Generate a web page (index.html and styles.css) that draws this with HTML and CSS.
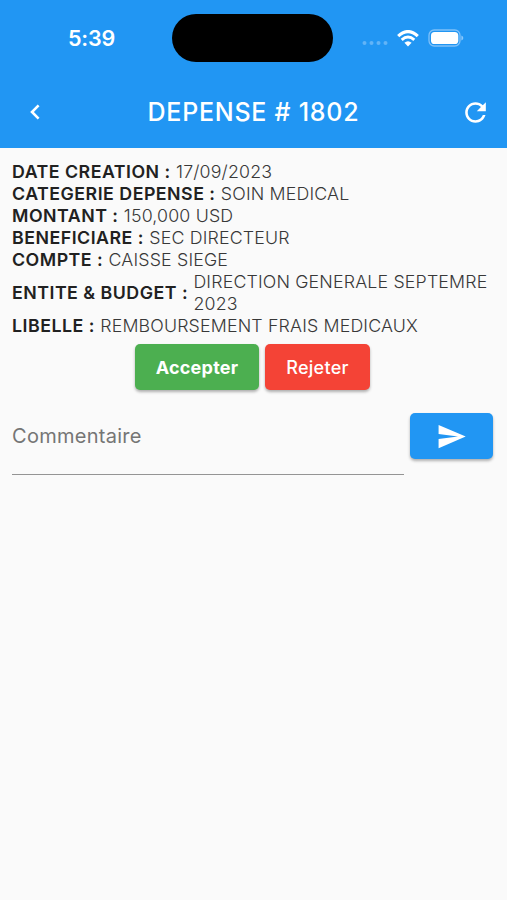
FILE: index.html
```
<!DOCTYPE html>
<html lang="fr"><head>
  <meta charset="utf-8">
  <meta name="viewport" content="width=device-width, initial-scale=1">
  <title>Depense # 1802</title>
  <link rel="stylesheet" href="styles.css">
</head>
<body>
<header>
  <div class="statusbar">
    <div class="clock">5:39</div>
    <div class="island"></div>
    <div class="status">
      <svg class="signal" width="26" height="6" viewBox="0 0 26 6">
        <circle cx="2.5" cy="3" r="2"/><circle cx="9.5" cy="3" r="2"/><circle cx="16.5" cy="3" r="2"/><circle cx="23.5" cy="3" r="2"/>
      </svg>
      <svg class="wifi" width="22" height="17" viewBox="0 0 22 17">
        <path d="M1.2 6.1Q11-2.9 20.8 6.1" stroke-width="3.2"/>
        <path d="M4.7 9.8Q11 4.2 17.3 9.8" stroke-width="2.9"/>
        <path class="dot" d="M7.4 12.7Q11 9.7 14.6 12.7L11 16.4Z"/>
      </svg>
      <svg class="battery" width="36" height="18" viewBox="0 0 36 18">
        <rect class="case" x="1" y="1" width="31" height="16" rx="5.2"/>
        <rect class="level" x="3" y="3" width="27.3" height="12" rx="3.6"/>
        <path class="tip" d="M33.4 6.4Q35.3 7.3 35.3 9T33.4 11.6Z"/>
      </svg>
    </div>
  </div>
  <div class="appbar">
    <button class="icon back" aria-label="Retour">
      <svg width="12" height="16" viewBox="0 0 12 16"><path d="M9.6 1.4L3 8L9.6 14.6"/></svg>
    </button>
    <h1>DEPENSE # 1802</h1>
    <button class="icon reload" aria-label="Actualiser">
      <svg width="31" height="31" viewBox="0 0 24 24"><path d="M17.65 6.35C16.2 4.9 14.21 4 12 4c-4.42 0-7.99 3.58-7.99 8s3.57 8 7.99 8c3.73 0 6.84-2.55 7.73-6h-2.08c-.82 2.33-3.04 4-5.65 4-3.31 0-6-2.69-6-6s2.69-6 6-6c1.66 0 3.14.69 4.22 1.78L13 11h7V4l-2.35 2.35z"/></svg>
    </button>
  </div>
</header>
<main>
  <dl class="details">
    <div class="row"><dt>DATE CREATION :</dt><dd>17/09/2023</dd></div>
    <div class="row"><dt>CATEGERIE DEPENSE :</dt><dd>SOIN MEDICAL</dd></div>
    <div class="row"><dt>MONTANT :</dt><dd>150,000 USD</dd></div>
    <div class="row"><dt>BENEFICIARE :</dt><dd>SEC DIRECTEUR</dd></div>
    <div class="row"><dt>COMPTE :</dt><dd>CAISSE SIEGE</dd></div>
    <div class="row"><dt>ENTITE &amp; BUDGET :</dt><dd>DIRECTION GENERALE SEPTEMRE 2023</dd></div>
    <div class="row"><dt>LIBELLE :</dt><dd>REMBOURSEMENT FRAIS MEDICAUX</dd></div>
  </dl>
  <div class="actions">
    <button class="btn accept">Accepter</button>
    <button class="btn reject">Rejeter</button>
  </div>
  <form class="comment">
    <input type="text" placeholder="Commentaire">
    <button type="button" class="btn send" aria-label="Envoyer">
      <svg width="31" height="31" viewBox="0 0 24 24"><path d="M2.01 21L23 12 2.01 3 2 10l15 2-15 2z"/></svg>
    </button>
  </form>
</main>
</body></html>
```
FILE: styles.css
```
*{
  box-sizing: border-box;
}
body{
  margin: 0;
  min-height: 900px;
  background-color: #fafafa;
  color: #212121;
  font-family: Inter, "Liberation Sans", sans-serif;
}
button, input{
  font-family: inherit;
  border: none;
  margin: 0;
  padding: 0;
}
svg{
  display: block;
}
header{
  height: 148px;
  background-color: #2196f3;
  color: #fff;
}
.statusbar{
  display: grid;
  grid-template-columns: 172px 161px 1fr;
  align-items: center;
  height: 76px;
}
.clock{
  padding-left: 68px;
  font-size: 21.5px;
  font-weight: 600;
  letter-spacing: -0.2px;
}
.island{
  height: 48px;
  border-radius: 24px;
  background-color: #000;
}
.status{
  display: flex;
  align-items: center;
  padding-left: 29px;
}
.signal{
  margin-top: 10px;
  fill: #62b4f7;
}
.wifi{
  margin-left: 9px;
  fill: none;
  stroke: #fff;
}
.wifi .dot{
  fill: #fff;
  stroke: none;
}
.battery{
  margin-left: 9px;
  fill: #fff;
}
.battery .case{
  fill: none;
  stroke: #7fc1f9;
  stroke-width: 1.3;
}
.battery .tip{
  fill: #8cc8fa;
}
.appbar{
  display: grid;
  grid-template-columns: 60px 1fr 60px;
  align-items: center;
  height: 72px;
  padding: 0 16px 0 16px;
}
h1{
  margin: 0;
  font-size: 25px;
  font-weight: 450;
  letter-spacing: 0.75px;
  text-align: center;
}
.icon{
  background: none;
}
.back{
  padding-left: 13px;
}
.back svg{
  fill: none;
  stroke: #fff;
  stroke-width: 2.6;
}
.reload{
  justify-self: end;
}
.reload svg, .send svg{
  fill: #fff;
}
main{
  padding: 13px 14px 12px 12px;
}
.details{
  margin: 0;
  font-size: 17.8px;
  line-height: 22px;
}
.row{
  display: flex;
  align-items: center;
  gap: 5.3px;
}
dt{
  flex: none;
  font-weight: 600;
  letter-spacing: 0.49px;
}
dd{
  margin: 0;
  color: #383838;
  font-weight: 330;
  letter-spacing: 0.16px;
}
.actions{
  display: flex;
  justify-content: center;
  gap: 6px;
  margin-top: 7px;
}
.btn{
  height: 46px;
  border-radius: 5px;
  color: #fff;
  font-size: 18px;
  letter-spacing: 0.25px;
  box-shadow: 0 2px 3px rgba(0,0,0,.3);
}
.accept{
  width: 124px;
  background-color: #4caf50;
  font-weight: 700;
}
.reject{
  width: 105px;
  background-color: #f44336;
  font-weight: 500;
}
.comment{
  display: flex;
  align-items: flex-start;
  gap: 6px;
  margin-top: 23px;
}
.comment input{
  flex: 1;
  min-width: 0;
  height: 62px;
  padding-bottom: 16px;
  border-bottom: 1px solid #949494;
  background: none;
  font-size: 20px;
  letter-spacing: 0.27px;
  outline: none;
}
.comment input::placeholder{
  color: #757575;
  opacity: 1;
}
.send{
  display: flex;
  align-items: center;
  justify-content: center;
  width: 83px;
  background-color: #2196f3;
}
```
